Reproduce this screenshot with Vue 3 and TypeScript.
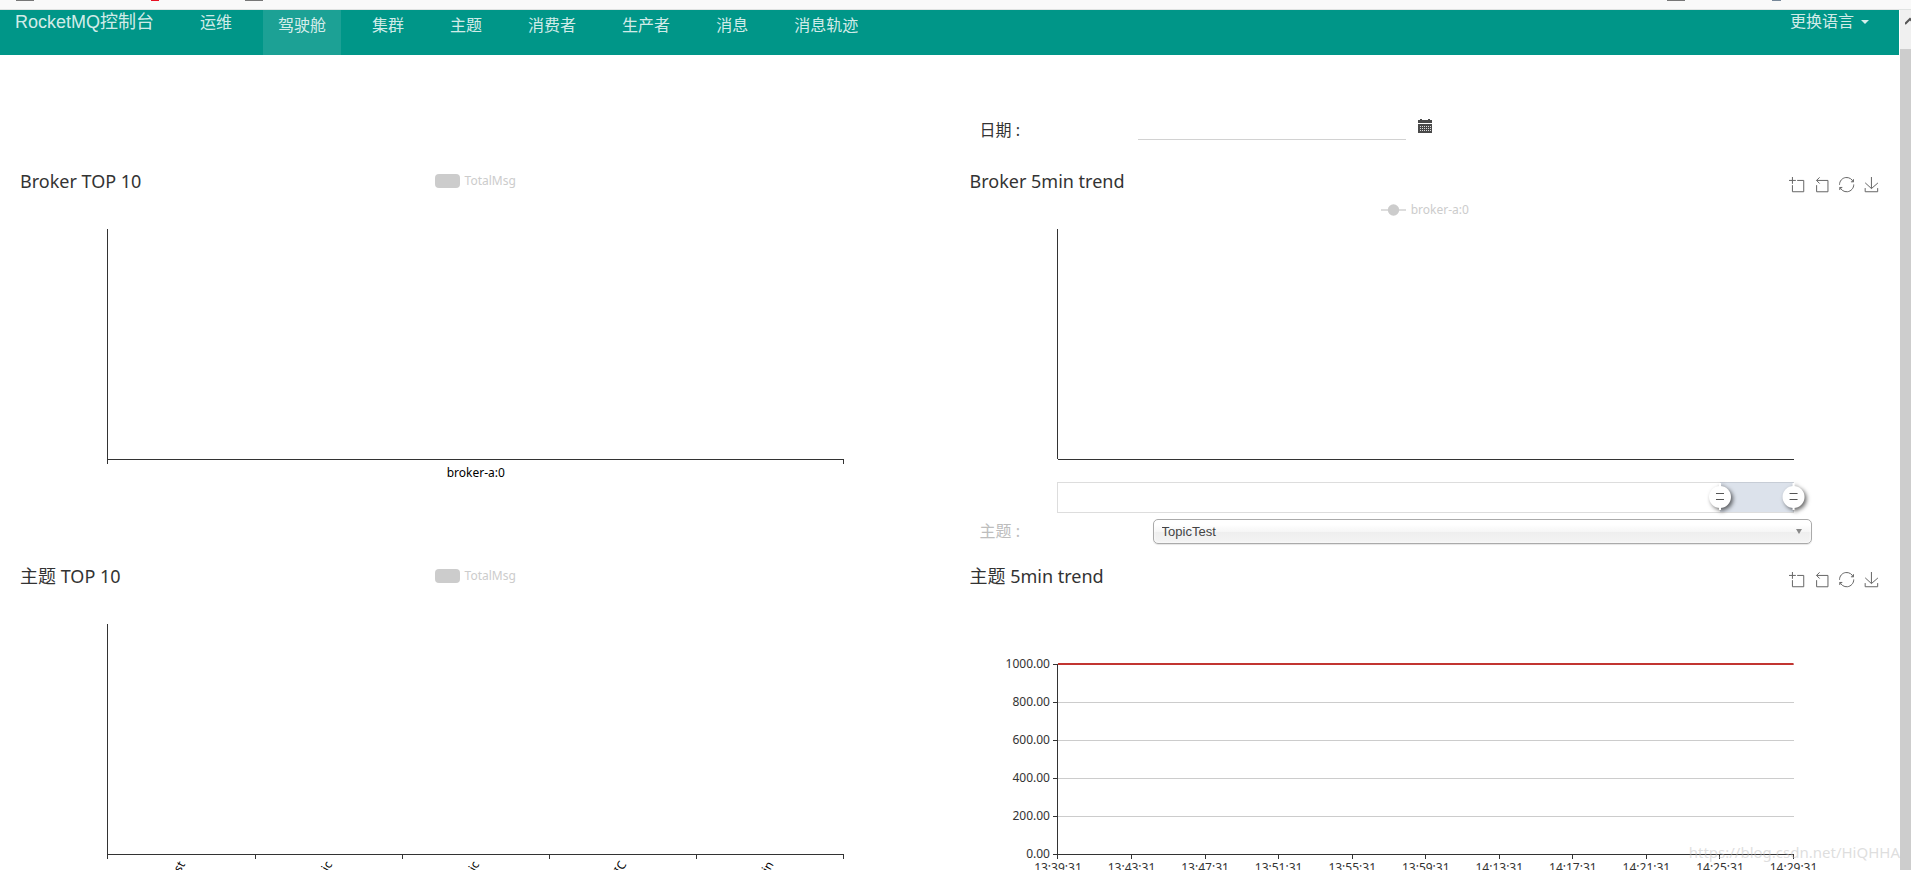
<script setup lang="ts">
import { ref } from 'vue'

interface NavItem {
  label: string
  active?: boolean
  raised?: boolean
}

interface Tool {
  name: string
  path: string
}

const navItems: NavItem[] = [
  { label: '运维', raised: true },
  { label: '驾驶舱', active: true },
  { label: '集群' },
  { label: '主题' },
  { label: '消费者' },
  { label: '生产者' },
  { label: '消息' },
  { label: '消息轨迹' },
]

const tools: Tool[] = [
  { name: 'zoom', path: 'M0,13.5h26.9 M13.5,26.9V0 M32.1,13.5H58V58H13.5 V32.1' },
  { name: 'zoom reset', path: 'M22,1.4L9.9,13.5l12.3,12.3 M10.3,13.5H54.9v44.6 H10.3v-26' },
  {
    name: 'restore',
    path: 'M47,18.9h9.8V8.7 M56.3,20.1 C52.1,9,40.5,0.6,26.8,2.1C12.6,3.7,1.6,16.2,2.1,30.6 M13,41.1H3.1v10.2 M3.7,39.9c4.2,11.1,15.8,19.5,29.5,18 c14.2-1.6,25.2-14.1,24.7-28.5',
  },
  { name: 'save', path: 'M4.7,22.9L29.3,45.5L54.7,23.4M4.6,43.6L4.6,58L53.8,58L53.8,43.6M29.2,45.1L29.2,0' },
]

const date = ref('')
const topic = ref('TopicTest')

// Plot area spans 10%..90% of each chart's width.
const pct = (fraction: number): string => `${10 + 80 * fraction}%`

const topicNames: string[] = ['Test', 'Topic', 'Topic', 'TOPIC', 'admin']
const topicTicks: number[] = [0, 1, 2, 3, 4, 5]

const yLabels = ['1000.00', '800.00', '600.00', '400.00', '200.00', '0.00'].map((text, i) => ({
  text,
  y: 100 + i * 38,
}))

const times: string[] = [
  '13:39:31', '13:43:31', '13:47:31', '13:51:31', '13:55:31', '13:59:31',
  '14:13:31', '14:17:31', '14:21:31', '14:25:31', '14:29:31',
]
</script>

<template>
  <div class="screen">
    <div class="chrome" aria-hidden="true">
      <i class="speck" /><i class="speck red" /><i class="speck" />
      <i class="speck far" /><i class="speck small" />
    </div>
    <div class="view">
      <div class="page">
        <nav class="navbar">
          <a class="brand" href="#">RocketMQ控制台</a>
          <ul class="menu">
            <li v-for="item in navItems" :key="item.label">
              <a href="#" :class="{ active: item.active, raised: item.raised }">{{ item.label }}</a>
            </li>
          </ul>
          <button class="lang" type="button">更换语言<span class="caret" /></button>
        </nav>

        <main class="board">
          <form class="date-row" @submit.prevent>
            <label for="date">日期 :</label>
            <input id="date" v-model="date" type="text" />
            <button class="calendar" type="button" aria-label="calendar">
              <svg width="14" height="14" viewBox="0 0 14 14">
                <path fill="#4a4a4a" d="M0 1h2V0h2v1h6V0h2v1h2v3H0zM0 5h14v9H0z" />
                <path
                  stroke="#ddd"
                  stroke-width="1"
                  stroke-dasharray="1 1"
                  d="M2 7.5h11M2 9.5h11M2 11.5h11"
                />
              </svg>
            </button>
          </form>

          <section class="chart">
            <svg class="plot" width="100%" height="350">
              <g class="axis">
                <line x1="10%" x2="10%" y1="60" y2="295" />
                <line x1="10%" x2="90%" y1="290" y2="290" />
                <line x1="90%" x2="90%" y1="290" y2="295" />
              </g>
              <text class="black" x="50%" y="308" text-anchor="middle">broker-a:0</text>
            </svg>
            <header class="head">
              <h2>Broker TOP 10</h2>
              <button class="legend" type="button"><span class="swatch" />TotalMsg</button>
            </header>
          </section>

          <section class="chart">
            <svg class="plot" width="100%" height="350">
              <g class="axis">
                <line x1="10%" x2="10%" y1="60" y2="290" />
                <line x1="10%" x2="90%" y1="290" y2="290" />
              </g>
              <rect class="zoom-track" x="10%" y="313" width="80%" height="30" />
              <rect class="zoom-range" x="82%" y="313" width="8%" height="30" />
              <svg v-for="x in ['82%', '90%']" :key="x" :x="x" y="328" overflow="visible">
                <g class="handle">
                  <path fill="#fff" d="M-1-14h2v4h-2zM-1 9h2v4h-2z" />
                  <circle r="11" fill="#fff" />
                  <path stroke="#555" stroke-width="1" d="M-4-3.5h8M-4 2.5h8" />
                </g>
              </svg>
            </svg>
            <header class="head">
              <h2>Broker 5min trend</h2>
              <span />
              <div class="tools">
                <button v-for="t in tools" :key="t.name" type="button" :aria-label="t.name">
                  <svg width="15" height="15" viewBox="0 0 59 59"><path :d="t.path" /></svg>
                </button>
              </div>
              <button class="legend second" type="button">
                <svg width="25" height="12" viewBox="0 0 25 12">
                  <path stroke="#ddd" stroke-width="2" d="M0 6h25" />
                  <circle cx="12.5" cy="6" r="5.7" fill="#ccc" />
                </svg>broker-a:0
              </button>
            </header>
          </section>

          <form class="topic-row" @submit.prevent>
            <label for="topic">主题 :</label>
            <div class="select">
              <select id="topic" v-model="topic">
                <option>TopicTest</option>
              </select>
            </div>
          </form>

          <section class="chart">
            <svg class="plot" width="100%" height="350">
              <g class="axis">
                <line x1="10%" x2="10%" y1="60" y2="290" />
                <line x1="10%" x2="90%" y1="290" y2="290" />
                <line v-for="i in topicTicks" :key="i" :x1="pct(i / 5)" :x2="pct(i / 5)" y1="290" y2="295" />
              </g>
              <svg v-for="(name, i) in topicNames" :key="i" :x="pct((i + 0.5) / 5)" y="298" overflow="visible">
                <text class="black" transform="rotate(-60)" text-anchor="end" dominant-baseline="central">{{ name }}</text>
              </svg>
            </svg>
            <header class="head">
              <h2>主题 TOP 10</h2>
              <button class="legend" type="button"><span class="swatch" />TotalMsg</button>
            </header>
          </section>

          <section class="chart">
            <svg class="plot" width="100%" height="350">
              <line
                v-for="row in yLabels.slice(0, 5)"
                :key="row.y"
                class="split"
                x1="10%"
                x2="90%"
                :y1="row.y"
                :y2="row.y"
              />
              <g class="axis">
                <line x1="10%" x2="10%" y1="100" y2="290" />
                <line x1="10%" x2="90%" y1="290" y2="290" />
                <line v-for="(time, i) in times" :key="time" :x1="pct(i / 10)" :x2="pct(i / 10)" y1="290" y2="295" />
              </g>
              <svg v-for="row in yLabels" :key="row.text" x="10%" :y="row.y" overflow="visible">
                <path class="tick" d="M-5 0H0" />
                <text x="-8" y="4" text-anchor="end">{{ row.text }}</text>
              </svg>
              <text v-for="(time, i) in times" :key="time" :x="pct(i / 10)" y="308" text-anchor="middle">{{ time }}</text>
              <line class="series" x1="10%" x2="90%" y1="100" y2="100" />
            </svg>
            <header class="head">
              <h2>主题 5min trend</h2>
              <span />
              <div class="tools">
                <button v-for="t in tools" :key="t.name" type="button" :aria-label="t.name">
                  <svg width="15" height="15" viewBox="0 0 59 59"><path :d="t.path" /></svg>
                </button>
              </div>
            </header>
          </section>
        </main>
      </div>

      <div class="scrollbar" aria-hidden="true">
        <div class="scroll-up">
          <svg width="6" height="8" viewBox="0 0 6 8"><path d="M0 7l5-5 5 5" /></svg>
        </div>
      </div>
    </div>
    <div class="watermark">https://blog.csdn.net/HiQHHA</div>
  </div>
</template>

<style>
body {
  margin: 0;
  background: #fff;
}
</style>

<style scoped>
* {
  box-sizing: border-box;
}

.screen {
  position: relative;
  display: flex;
  flex-direction: column;
  height: 100vh;
  overflow: hidden;
  color: #333;
  font-family: 'Noto Sans', 'Noto Sans CJK SC', sans-serif;
}

button {
  margin: 0;
  padding: 0;
  border: 0;
  background: none;
  font: inherit;
  color: inherit;
}

.chrome {
  flex: none;
  display: flex;
  height: 10px;
  padding: 0 130px 0 16px;
  border-bottom: 1px solid #e0e3e2;
  background: #f9f9f9;
}

.speck {
  width: 18px;
  height: 1px;
  background: #777;
}

.speck.red {
  width: 8px;
  margin: 0 86px 0 117px;
  background: #e81123;
}

.speck.far {
  margin-left: auto;
}

.speck.small {
  width: 9px;
  margin-left: 87px;
  background: #789;
}

.view {
  flex: 1;
  display: flex;
  gap: 1px;
  min-height: 0;
}

.page {
  flex: 1;
  min-width: 0;
}

.navbar {
  display: flex;
  height: 45px;
  background: #009688;
  font-family: 'Liberation Sans', 'Noto Sans CJK SC', sans-serif;
  font-size: 16px;
  line-height: 24px;
  color: rgba(255, 255, 255, 0.84);
}

.navbar a {
  color: inherit;
  text-decoration: none;
}

.brand {
  padding-left: 15px;
  font-size: 18px;
}

.menu {
  display: flex;
  gap: 16px;
  margin: 0 0 0 31px;
  padding: 0;
  list-style: none;
}

.menu a {
  display: block;
  height: 45px;
  padding: 4px 15px 0;
}

.menu .raised {
  padding-top: 1px;
}

.menu .active {
  background: rgba(255, 255, 255, 0.11);
}

.lang {
  display: flex;
  align-items: center;
  gap: 7px;
  height: 24px;
  margin: 0 30px 0 auto;
}

.caret {
  border: 4px solid transparent;
  border-top-color: currentColor;
  border-bottom: 0;
}

.board {
  display: grid;
  grid-template-columns: 1fr 1fr;
  column-gap: 30px;
  padding: 0 14px 0 16px;
}

.date-row,
.topic-row {
  grid-column: 2;
  display: grid;
  padding-left: 14px;
  font-size: 16px;
  line-height: 24px;
}

.date-row {
  grid-template-columns: 158fr 268fr 479fr;
  align-items: start;
  height: 114px;
  padding-top: 60px;
}

.date-row label {
  padding-top: 3px;
}

.date-row input {
  width: 100%;
  height: 25px;
  padding: 0;
  border: 0;
  border-bottom: 1px solid #d2d2d2;
  background: none;
  font: inherit;
  outline: 0;
}

.calendar {
  justify-self: start;
  padding: 4px 12px;
  line-height: 0;
}

.topic-row {
  grid-template-columns: 173fr 659fr 73fr;
  align-items: start;
  height: 45px;
}

.topic-row label {
  color: #bdbdbd;
}

.select {
  display: grid;
  align-items: center;
}

.select select {
  grid-area: 1 / 1;
  width: 100%;
  height: 25px;
  padding: 0 8px;
  border: 1px solid #aaa;
  border-radius: 5px;
  appearance: none;
  background: linear-gradient(#fff 20%, #f6f6f6 50%, #eee 52%, #f4f4f4 100%);
  box-shadow: 0 0 3px #fff inset, 0 1px 1px rgba(0, 0, 0, 0.1);
  color: #444;
  font: 13px 'Liberation Sans', sans-serif;
}

.select::after {
  content: '';
  grid-area: 1 / 1;
  justify-self: end;
  margin-right: 10px;
  border: 3px solid transparent;
  border-top: 5px solid #888;
  border-bottom: 0;
  pointer-events: none;
}

.chart {
  display: grid;
  min-width: 0;
  height: 350px;
}

.plot,
.head {
  grid-area: 1 / 1;
}

.plot {
  display: block;
  overflow: visible;
  font-size: 12px;
  fill: #333;
}

.black {
  fill: #000;
}

.axis line,
.tick {
  stroke: #333;
  shape-rendering: crispEdges;
}

.split {
  stroke: #ccc;
  shape-rendering: crispEdges;
}

.series {
  stroke: #c23531;
  stroke-width: 2;
}

.zoom-track {
  fill: none;
  stroke: #ddd;
  shape-rendering: crispEdges;
}

.zoom-range {
  fill: rgba(167, 183, 204, 0.4);
}

.handle {
  filter: drop-shadow(2px 2px 2px rgba(0, 0, 0, 0.6));
}

.head {
  align-self: start;
  display: grid;
  grid-template-columns: 1fr auto 1fr;
  grid-template-rows: 24px auto;
  row-gap: 8px;
  padding: 0 5px 0 4px;
}

h2 {
  margin: 0;
  font-size: 18px;
  font-weight: 400;
  line-height: 24px;
}

.legend {
  display: flex;
  align-items: center;
  gap: 5px;
  font-size: 12px;
  line-height: 18px;
  color: #ccc;
}

.legend.second {
  grid-column: 1 / -1;
  justify-self: center;
}

.swatch {
  width: 25px;
  height: 14px;
  border-radius: 4px;
  background: #ccc;
}

.tools {
  display: flex;
  justify-self: end;
  gap: 10px;
  padding: 6px 1px 0 0;
}

.tools button {
  line-height: 0;
}

.tools svg {
  overflow: visible;
}

.tools path {
  fill: none;
  stroke: #666;
  vector-effect: non-scaling-stroke;
}

.scrollbar {
  flex: none;
  width: 11px;
  background: #cdcdcd;
}

.scroll-up {
  display: flex;
  justify-content: flex-end;
  height: 39px;
  padding-top: 7px;
  background: #f0f0f0;
}

.scroll-up path {
  fill: none;
  stroke: #555;
  stroke-width: 2;
}

.watermark {
  position: absolute;
  right: 11px;
  bottom: 6px;
  font: 15px/24px 'Noto Sans', sans-serif;
  color: rgba(190, 190, 190, 0.5);
  pointer-events: none;
}
</style>
